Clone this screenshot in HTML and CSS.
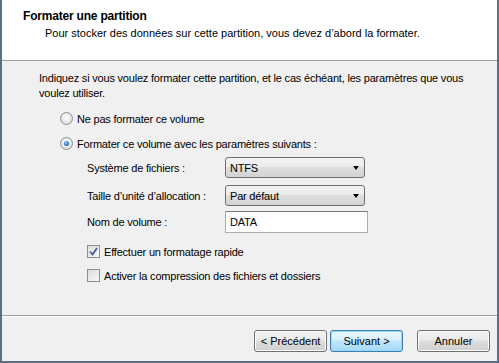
FILE: index.html
```html
<!DOCTYPE html>
<html lang="fr">
<head>
  <meta charset="UTF-8" />
  <title>Formater une partition</title>
  <link rel="stylesheet" href="styles.css">
</head>
<body>
  <div class="wizard">
    <div class="head">
      <div class="title">Formater une partition</div>
      <div class="subtitle">Pour stocker des données sur cette partition, vous devez d’abord la formater.</div>
    </div>

    <div class="content">
      <p class="intro">Indiquez si vous voulez formater cette partition, et le cas échéant, les paramètres que vous voulez utiliser.</p>

      <div class="option radio-row">
        <span class="radio"></span>
        <span>Ne pas formater ce volume</span>
      </div>
      <div class="option radio-row">
        <span class="radio on"></span>
        <span>Formater ce volume avec les paramètres suivants :</span>
      </div>

      <div class="fields">
        <div class="field">
          <span class="label">Système de fichiers :</span>
          <div class="combo">NTFS<span class="arrow"></span></div>
        </div>
        <div class="field">
          <span class="label">Taille d’unité d’allocation :</span>
          <div class="combo">Par défaut<span class="arrow"></span></div>
        </div>
        <div class="field field-text">
          <span class="label">Nom de volume :</span>
          <div class="textbox">DATA</div>
        </div>
      </div>

      <div class="option check-row first">
        <span class="check on">
          <svg width="9" height="9" viewBox="0 0 9 9"><path d="M1 4.5 L3.5 7.5 L8 1" fill="none" stroke="#4a5a9a" stroke-width="1.8"/></svg>
        </span>
        <span>Effectuer un formatage rapide</span>
      </div>
      <div class="option check-row">
        <span class="check"></span>
        <span>Activer la compression des fichiers et dossiers</span>
      </div>
    </div>

    <div class="foot">
      <button class="btn">&lt; Précédent</button>
      <button class="btn default">Suivant &gt;</button>
      <button class="btn cancel">Annuler</button>
    </div>
  </div>
</body>
</html>
```

FILE: styles.css
```css
body {
  margin: 0;
  background: #f0f0f0;
  font-family: 'Liberation Sans', Arial, sans-serif;
  font-size: 11px;
  color: #000;
}

.wizard {
  width: 495px;
  height: 361px;
  border: 2px solid #5c6f84;
  border-top: none;
  display: flex;
  flex-direction: column;
  background: #f0f0f0;
}

.head {
  background: #fff;
  border-bottom: 1px solid #a0a0a0;
  padding: 9px 0 0 21px;
  box-sizing: border-box;
  height: 61px;
}

.title {
  font-size: 12px;
  font-weight: bold;
  line-height: 15px;
  letter-spacing: -0.2px;
}

.subtitle {
  margin-top: 2px;
  padding-left: 22px;
  line-height: 14px;
}

.content {
  flex: 1;
  padding: 10px 0 0 37px;
  border-bottom: 1px solid #a0a0a0;
  letter-spacing: -0.2px;
}

.intro {
  margin: 0;
  width: 450px;
  line-height: 15px;
}

.option {
  display: flex;
  align-items: center;
  gap: 4px;
  height: 17px;
}

.radio-row {
  margin-left: 21px;
  margin-top: 8px;
}

.radio-row:first-of-type {
  margin-top: 9px;
}

.radio {
  width: 11px;
  height: 11px;
  border: 1px solid #8d8f92;
  border-radius: 50%;
  background: radial-gradient(circle at 50% 40%, #fdfdfd 0%, #e4e4e4 60%, #cfcfcf 100%);
  position: relative;
}

.radio.on::after {
  content: "";
  position: absolute;
  left: 3px;
  top: 3px;
  width: 5px;
  height: 5px;
  border-radius: 50%;
  background: radial-gradient(circle at 40% 35%, #9ed2f5 0%, #2a79c4 55%, #0f4f96 100%);
}

.fields {
  margin: 5px 0 0 48px;
}

.field {
  display: flex;
  align-items: center;
  height: 21px;
  margin-bottom: 7px;
}

.field-text {
  height: 22px;
  margin-bottom: 0;
  margin-top: -2px;
}

.label {
  width: 138px;
}

.combo {
  width: 134px;
  height: 19px;
  border: 1px solid #707070;
  border-radius: 3px;
  background: linear-gradient(#f3f3f3, #ececec 45%, #dedede 50%, #d3d3d3);
  padding-left: 4px;
  display: flex;
  align-items: center;
  position: relative;
}

.arrow {
  position: absolute;
  right: 5px;
  top: 8px;
  border-left: 3.5px solid transparent;
  border-right: 3.5px solid transparent;
  border-top: 4px solid #000;
}

.textbox {
  width: 137px;
  height: 20px;
  border: 1px solid #abadb3;
  border-top-color: #7a7a7a;
  background: #fff;
  padding-left: 4px;
  display: flex;
  align-items: center;
}

.check-row {
  margin-left: 48px;
  margin-top: 7px;
}

.check-row.first {
  margin-top: 10px;
}

.check {
  width: 11px;
  height: 11px;
  border: 1px solid #8f8f8f;
  background: linear-gradient(135deg, #dcdcdc, #f7f7f7);
  display: flex;
  align-items: center;
  justify-content: center;
}

.foot {
  height: 45px;
  border-top: 1px solid #fff;
  display: flex;
  align-items: flex-start;
  padding: 13px 0 0 252px;
  box-sizing: border-box;
}

.btn {
  width: 73px;
  height: 22px;
  font-family: 'Liberation Sans', Arial, sans-serif;
  font-size: 11px;
  color: #000;
  border: 1px solid #707070;
  border-radius: 3px;
  background: linear-gradient(#f2f2f2, #ebebeb 45%, #dddddd 50%, #cfcfcf);
  box-shadow: inset 0 0 0 1px #fcfcfc;
  padding: 0;
  margin-right: 3px;
}

.btn.default {
  border-color: #3c7fb1;
  background: linear-gradient(#eaf6fd, #d9f0fc 45%, #bee6fd 50%, #a7d9f5);
  box-shadow: inset 0 0 0 1px #9ad7f7;
}

.btn.cancel {
  margin-left: 11px;
}
```
